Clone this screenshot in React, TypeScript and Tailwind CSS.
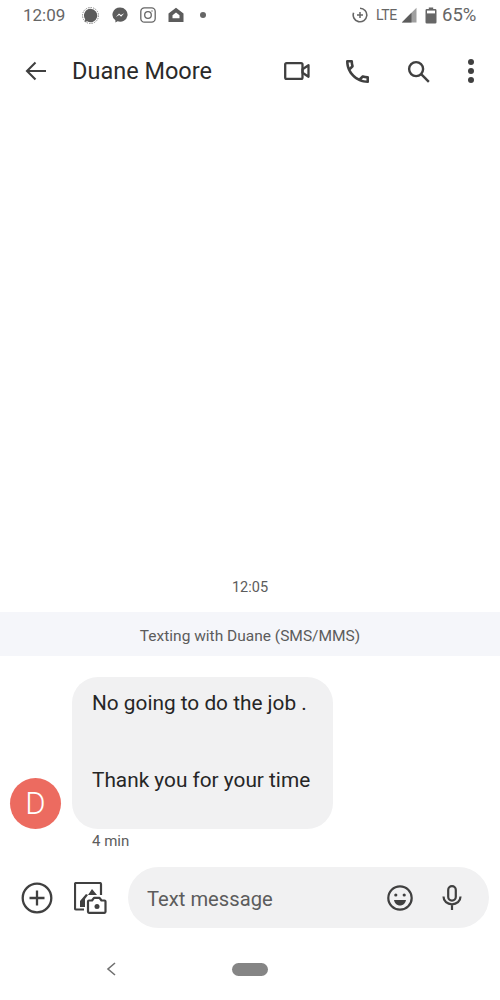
import React from 'react'

const StatusBar: React.FC = () => (
  <div className="flex h-[30px] items-center pl-[23px] pr-[23px] text-[#666666]">
    <span className="w-[59px] text-[17px] leading-none">12:09</span>
    <svg width="17" height="17" viewBox="0 0 17 17">
      <circle cx="8.5" cy="8.5" r="8" fill="none" stroke="#8a8a8a" strokeWidth="1" strokeDasharray="1.5 1" />
      <path d="M8.5 1.800a6.700 6.700 0 1 1-3.300 12.500l-2.700.7.7-2.700a6.700 6.700 0 0 1 5.300-10.500z" fill="#5c5c5c" />
    </svg>
    <svg width="16" height="16" viewBox="0 0 16 16" className="ml-[13px]">
      <path d="M8 0.5a7.5 7.1 0 0 0-4.600 12.700v2.300l2.200-1.200A7.5 7.1 0 1 0 8 0.500z" fill="#5c5c5c" />
      <path d="M3.800 10l3.200-3.600 1.900 1.700 3.300-1.900-3.100 3.600-1.900-1.800z" fill="#fff" />
    </svg>
    <svg width="16" height="16" viewBox="0 0 16 16" className="ml-[12px]" fill="none" stroke="#666666">
      <rect x="0.800" y="0.800" width="14.400" height="14.400" rx="3.600" strokeWidth="1.300" />
      <circle cx="8" cy="8" r="3.300" strokeWidth="1.300" />
      <circle cx="12" cy="4" r="0.700" fill="#666666" stroke="none" />
    </svg>
    <svg width="16" height="16" viewBox="0 0 16 16" className="ml-[12px]">
      <path fillRule="evenodd" d="M8 0.800L15.500 6.600V15H0.500V6.600zM8 5.400L4.500 8.200V11.200H11.500V8.200z" fill="#5c5c5c" />
    </svg>
    <span className="ml-[16px] h-[6px] w-[6px] rounded-full bg-[#666666]" />
    <div className="flex-1" />
    <svg width="16" height="16" viewBox="0 0 16 16" fill="none" stroke="#666666">
      <path d="M8 1.200a6.800 6.800 0 1 1-6.400 4.500" strokeWidth="1.600" />
      <path d="M5 8h6M8 5v6" strokeWidth="1.500" />
    </svg>
    <span className="ml-[8px] text-[14px] leading-none tracking-[-0.3px]">LTE</span>
    <svg width="16" height="16" viewBox="0 0 16 16" className="ml-[4px]">
      <path d="M15.500 0.800V15.500H0.800z" fill="#a0a0a0" />
      <path d="M10.500 5.800V15.500H0.800z" fill="#5c5c5c" />
    </svg>
    <svg width="12" height="17" viewBox="0 0 12 17" className="ml-[8px]">
      <path d="M3.800 0.600h4.400v1.500h2a1.300 1.300 0 0 1 1.300 1.300v11.800a1.300 1.300 0 0 1-1.300 1.300H1.800a1.300 1.300 0 0 1-1.300-1.300V3.400a1.300 1.300 0 0 1 1.300-1.300h2z" fill="#666666" />
      <rect x="2" y="3.600" width="8" height="2.800" fill="#fff" />
    </svg>
    <span className="ml-[5px] w-[35px] text-[18.500px] leading-none">65%</span>
  </div>
)

const Header: React.FC = () => (
  <div className="flex h-[82px] items-center">
    <svg width="22" height="20" viewBox="0 0 22 20" className="ml-[25px]" fill="none" stroke="#404040" strokeWidth="2.100">
      <path d="M21 10H2M10.500 1.500L2 10l8.500 8.500" />
    </svg>
    <span className="ml-[25px] mt-[2px] w-[212px] text-[23.500px] leading-none text-[#2a2a2a]">Duane Moore</span>
    <svg width="26" height="20" viewBox="0 0 26 20" fill="none" stroke="#404040" strokeWidth="2.300" strokeLinejoin="round">
      <rect x="1.200" y="2.200" width="17.300" height="15.600" rx="1.400" />
      <path d="M18.500 8.200l6-4v11.600l-6-4z" />
    </svg>
    <svg width="23" height="23" viewBox="3 3 18 18" className="ml-[36px]" fill="#404040">
      <path d="M6.540 5c.06.89.21 1.760.45 2.590l-1.200 1.200c-.41-1.200-.67-2.470-.76-3.790h1.510m9.860 12.020c.85.24 1.720.39 2.600.45v1.490c-1.320-.09-2.590-.35-3.800-.75l1.200-1.190M7.500 3H4c-.55 0-1 .45-1 1 0 9.390 7.610 17 17 17 .55 0 1-.45 1-1v-3.490c0-.55-.45-1-1-1-1.240 0-2.450-.2-3.570-.57-.1-.04-.21-.05-.31-.05-.26 0-.51.1-.71.29l-2.200 2.200c-2.830-1.450-5.150-3.760-6.590-6.590l2.200-2.200c.28-.28.36-.67.25-1.020C8.700 6.450 8.500 5.250 8.500 4c0-.55-.45-1-1-1z" />
    </svg>
    <svg width="23" height="23" viewBox="0 0 24 24" className="ml-[38px]" fill="none" stroke="#404040" strokeWidth="2.500">
      <circle cx="9.500" cy="9.500" r="7.300" />
      <path d="M14.800 14.800l8 8" />
    </svg>
    <div className="ml-[38px] flex flex-col gap-[3.500px]">
      <span className="h-[5.500px] w-[5.500px] rounded-full bg-[#404040]" />
      <span className="h-[5.500px] w-[5.500px] rounded-full bg-[#404040]" />
      <span className="h-[5.500px] w-[5.500px] rounded-full bg-[#404040]" />
    </div>
  </div>
)

const Composer: React.FC = () => (
  <div className="flex h-[61px] items-center pl-[21px] pr-[11px]">
    <svg width="32" height="32" viewBox="0 0 32 32" fill="none" stroke="#404040" strokeWidth="2.300">
      <circle cx="16" cy="16" r="14.300" />
      <path d="M16 8.500v15M8.500 16h15" />
    </svg>
    <svg width="33" height="32" viewBox="0 0 33 32" className="ml-[21px]" fill="none" stroke="#404040" strokeWidth="2.200" strokeLinejoin="round">
      <path d="M10 27.500H2.200a1.200 1.200 0 0 1-1.200-1.200V2.200a1.200 1.200 0 0 1 1.200-1.200h23.600a1.200 1.200 0 0 1 1.200 1.200V13" />
      <path d="M6 25v-6l6-7 2 1 4-6 5 6h-9l-3 4v8z" fill="#404040" stroke="none" />
      <path d="M15 18.500h3l2-2.700h5.500l2 2.700h3a1 1 0 0 1 1 1v10.300a1 1 0 0 1-1 1H15a1 1 0 0 1-1-1V19.500a1 1 0 0 1 1-1z" fill="#fff" />
      <circle cx="23" cy="24.500" r="2.500" fill="#404040" stroke="none" />
    </svg>
    <div className="ml-[21px] flex h-[61px] flex-1 items-center rounded-[31px] bg-[#f1f1f2] pl-[19px] pr-[27px]">
      <span className="mt-[3px] flex-1 text-[20.200px] leading-none text-[#5c5c5c]">Text message</span>
      <svg width="26" height="26" viewBox="0 0 26 26" fill="none" stroke="#404040" strokeWidth="2.200">
        <circle cx="13" cy="13" r="11.700" />
        <circle cx="8.800" cy="10" r="1.600" fill="#404040" stroke="none" />
        <circle cx="17.200" cy="10" r="1.600" fill="#404040" stroke="none" />
        <path d="M7 15h12c-.6 3.400-3 5.500-6 5.500s-5.400-2.100-6-5.500z" fill="#404040" stroke="none" />
      </svg>
      <svg width="20" height="25" viewBox="0 0 20 25" className="ml-[29px]" fill="none" stroke="#404040" strokeWidth="2.200">
        <rect x="6.200" y="1.100" width="7.600" height="14.500" rx="3.800" />
        <path d="M1.500 11.500c0 4.800 3.800 7.800 8.500 7.800s8.500-3 8.500-7.800M10 19v6" />
      </svg>
    </div>
  </div>
)

export default function App() {
  return (
    <div className="flex h-[1000px] w-[500px] flex-col overflow-hidden bg-white font-['Roboto',sans-serif]">
      <StatusBar />
      <Header />

      <div className="flex flex-1 flex-col justify-end">
        <div className="text-center text-[14.500px] leading-none text-[#5c5c5c]">12:05</div>
        <div className="mt-[17px] flex h-[44px] items-center justify-center bg-[#f5f6fa] pt-[5px] text-[15.500px] text-[#5c5c5c]">
          Texting with Duane (SMS/MMS)
        </div>

        <div className="mt-[21px] flex items-end pl-[10px]">
          <div className="flex h-[51px] w-[51px] items-center justify-center rounded-full bg-[#ec6b60] text-[31px] font-light leading-none text-white">
            D
          </div>
          <div className="ml-[11px] w-[261px] rounded-[26px] bg-[#f1f1f2] pb-[37px] pl-[20px] pt-[14px] text-[20.800px] leading-[24px] text-[#262626]">
            <div>No going to do the job .</div>
            <div className="mt-[53px]">Thank you for your time</div>
          </div>
        </div>
        <div className="mt-[4px] pl-[92px] text-[15px] leading-[17px] text-[#5c5c5c]">4 min</div>
      </div>

      <div className="mt-[17px]">
        <Composer />
      </div>

      <div className="h-[72px]">
        <div className="flex h-[82px] items-center pl-[106px]">
          <svg width="10" height="14" viewBox="0 0 10 14" fill="none" stroke="#707070" strokeWidth="1.600">
            <path d="M9 1L2 7l7 6" />
          </svg>
          <span className="ml-[116px] h-[13px] w-[36px] rounded-[7px] bg-[#858585]" />
        </div>
      </div>
    </div>
  )
}
